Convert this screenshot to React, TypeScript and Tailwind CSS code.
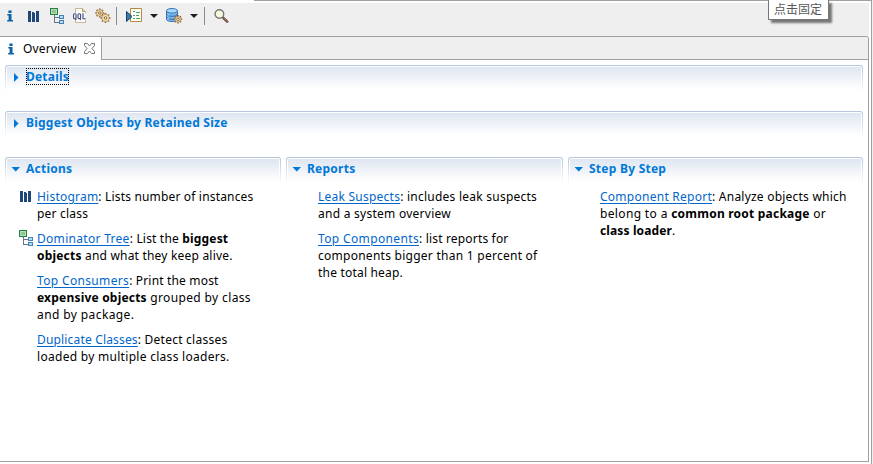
import type { ReactNode } from "react";

function InfoIcon() {
  return (
    <svg width="16" height="16" viewBox="0 0 16 16" className="shrink-0">
      <path d="M6.4 2.4h3.2v2.6H6.4zM5.3 6h4.2v6H11v1.4H5.2V12h1.4V7.4H5.3z" fill="#0b62a8" />
    </svg>
  );
}

function HistogramIcon() {
  return (
    <svg width="16" height="16" viewBox="0 0 16 16" className="shrink-0" shapeRendering="crispEdges">
      <path d="M3 3h3v11H3zM7 4h3v10H7zM11 3h3v11h-3z" fill="#1f4879" />
      <path d="M9 4h1v1H9z" fill="#efefef" />
    </svg>
  );
}

function TreeIcon() {
  return (
    <svg width="16" height="16" viewBox="0 0 16 16" className="shrink-0" shapeRendering="crispEdges">
      <path d="M1 0h8v7H1z" fill="#23804d" />
      <path d="M2 1h6v5H2z" fill="#b9dcae" />
      <path d="M3 2h4v3H3z" fill="#8fc58d" />
      <path d="M5 7h1v8H5zM6 9h4v1H6zM6 14h4v1H6z" fill="#68738c" />
      <path d="M10 7h5v4h-5zM10 12h5v4h-5z" fill="#4a7fb5" />
      <path d="M11 8h3v2h-3zM11 13h3v2h-3z" fill="#a9e0fb" />
    </svg>
  );
}

function OqlIcon() {
  return (
    <svg width="16" height="16" viewBox="0 0 16 16" className="shrink-0">
      <path d="M3.5.5h7l3 3v11h-10z" fill="#fbfbf7" stroke="#c2b798" />
      <path d="M10.5.5v3h3" fill="#ead9a3" stroke="#b9a164" />
      <path d="M0 5h14v6.5H0z" fill="#f4f5f8" />
      <g fill="none" stroke="#454c7c" strokeWidth="1.1">
        <rect x="1.5" y="5.8" width="2.6" height="5" rx="1.2" />
        <rect x="6" y="5.8" width="2.6" height="5" rx="1.2" />
        <path d="M3.2 10l1 2M7.7 10l1 2M11 5.3v5.5h2.6" />
      </g>
    </svg>
  );
}

function Gear({ x, y, r }: { x: number; y: number; r: number }) {
  return (
    <g transform={`translate(${x} ${y})`}>
      <g stroke="#8d6235" strokeWidth="1.6">
        <path d={`M0 ${-r - 1}V${r + 1}M${-r - 1} 0H${r + 1}`} />
        <path d={`M0 ${-r - 1}V${r + 1}M${-r - 1} 0H${r + 1}`} transform="rotate(45)" />
      </g>
      <circle r={r - 0.3} fill="#f6e2b2" stroke="#b08850" strokeWidth="0.7" />
      <circle r="1.3" fill="#fffbe9" stroke="#7d5a2c" strokeWidth="0.9" />
    </g>
  );
}

function GearsIcon() {
  return (
    <svg width="16" height="16" viewBox="0 0 16 16" className="shrink-0">
      <Gear x={4.8} y={5} r={3.5} />
      <Gear x={10.5} y={10} r={4} />
    </svg>
  );
}

function RunReportIcon() {
  return (
    <svg width="16" height="16" viewBox="0 0 16 16" className="shrink-0">
      <path d="M4.5.5h11v13h-11z" fill="#fffef5" stroke="#b18c42" />
      <path d="M7 3.5h2M7 7.5h2M7 10.5h2M10 4.5h4M10 7.5h3M10 10.5h4" stroke="#4aa078" />
      <path d="M.5 3.5v10l5.5-5z" fill="#367e9f" stroke="#173f75" />
    </svg>
  );
}

function DatabaseGearIcon() {
  return (
    <svg width="17" height="16" viewBox="0 0 17 16" className="shrink-0">
      <path d="M.5 3v8c0 3.4 11 3.4 11 0V3" fill="#7db9ee" stroke="#3577b8" />
      <ellipse cx="6" cy="2.8" rx="5.5" ry="2.3" fill="#a9d9f8" stroke="#3577b8" />
      <path d="M.5 6c0 3 11 3 11 0M.5 9c0 3 11 3 11 0" fill="none" stroke="#286aac" />
      <path d="M2 6.8v1M2 10v1.5" stroke="#d2efff" />
      <Gear x={12} y={11.3} r={3.2} />
    </svg>
  );
}

function SearchIcon() {
  return (
    <svg width="16" height="16" viewBox="0 0 16 16" className="shrink-0">
      <path d="M9.3 8.8l3.9 3.9" stroke="#6d4c43" strokeWidth="2.5" strokeLinecap="round" />
      <path d="M10 9l3.4 3.4" stroke="#b88b78" strokeWidth=".7" />
      <circle cx="5.4" cy="5" r="4.3" fill="#f8f8df" stroke="#777772" strokeWidth="1.4" />
    </svg>
  );
}

function DropArrow() {
  return (
    <svg width="8" height="4" viewBox="0 0 8 4" className="shrink-0">
      <path d="M0 0h8L4 4z" fill="#202020" />
    </svg>
  );
}

function CloseIcon() {
  return (
    <svg width="11" height="11" viewBox="0 0 11 11" className="shrink-0">
      <path d="M.5.5h3l2 2.5 2-2.5h3v2L8 5.5l2.5 3v2h-3l-2-2.5-2 2.5h-3v-2L3 5.5.5 2.5z" fill="#fff" stroke="#666" strokeWidth=".9" />
    </svg>
  );
}

function Header({ title, open, focused, tracking }: { title: string; open?: boolean; focused?: boolean; tracking: string }) {
  return (
    <div className="h-[27px] rounded-t-[3px] bg-linear-to-b from-[#b3c5dd] to-white px-px pt-px">
      <div className="flex h-[26px] rounded-t-[2px] bg-white px-px pt-px">
        <div className="flex h-[25px] w-full items-start bg-linear-to-b from-[#dfe6f1] to-white to-90% pl-[4px] pt-px">
          <svg width="9" height="9" viewBox="0 0 9 9" className="mt-[5px] shrink-0">
            {open ? <path d="M.5 2H9L4.75 6.5z" fill="#0078d7" /> : <path d="M3 0v9l4.5-4.5z" fill="#0078d7" />}
          </svg>
          <h2 className={`ml-[6px] h-[17px] whitespace-nowrap text-[12px]/[17px] font-bold text-[#0078d7] ${tracking} ${focused ? "outline-1 -outline-offset-1 outline-dotted outline-black" : ""}`}>
            {title}
          </h2>
        </div>
      </div>
    </div>
  );
}

function Item({ icon, children }: { icon?: ReactNode; children: ReactNode }) {
  return (
    <div className="flex">
      <div className="h-4 w-[19px] shrink-0">{icon}</div>
      <div>{children}</div>
    </div>
  );
}

function Line({ tracking, children }: { tracking: string; children: ReactNode }) {
  return <p className={`h-[17px] whitespace-nowrap ${tracking}`}>{children}</p>;
}

function Link({ children, tracking = "" }: { children: ReactNode; tracking?: string }) {
  return <a className={`text-[#0066cc] underline decoration-1 underline-offset-2 ${tracking}`}>{children}</a>;
}

export default function App() {
  return (
    <div className="relative flex h-[464px] w-[873px] overflow-hidden bg-white font-['Noto_Sans','Noto_Sans_CJK_SC',sans-serif] text-[12px]/[17px] text-black">
      <div className="flex w-[869px] shrink-0 flex-col">
        <div className="flex h-[3px] justify-end">
          <div className="h-px w-[615px] bg-[#a0a0a0]" />
        </div>
        <div className="flex h-[33px] items-start bg-[#efefef] pl-[2px] pt-[5px]">
          <InfoIcon />
          <div className="ml-[7px]"><HistogramIcon /></div>
          <div className="ml-2"><TreeIcon /></div>
          <div className="ml-[7px]"><OqlIcon /></div>
          <div className="ml-[7px]"><GearsIcon /></div>
          <div className="ml-[5px] -mt-px h-[18px] w-px bg-[#8c8c8c]" />
          <div className="ml-[9px]"><RunReportIcon /></div>
          <div className="ml-[8px] mt-[6px]"><DropArrow /></div>
          <div className="ml-[8px]"><DatabaseGearIcon /></div>
          <div className="ml-[7px] mt-[6px]"><DropArrow /></div>
          <div className="ml-[6px] -mt-px h-[18px] w-px bg-[#8c8c8c]" />
          <div className="ml-[9px] mt-px"><SearchIcon /></div>
        </div>
        <div className="flex min-h-0 flex-1 flex-col rounded-tr-[3px] border-r border-t border-[#a0a0a0]">
          <div className="flex h-[23px] shrink-0">
            <div className="flex w-[102px] items-center rounded-tr-[2px] border-r border-[#a0a0a0] bg-white pl-[3px]">
              <InfoIcon />
              <span className="ml-1 tracking-[0.15px]">Overview</span>
              <div className="ml-auto mr-[6px]"><CloseIcon /></div>
            </div>
            <div className="flex-1 rounded-tr-[2px] border-b border-[#a0a0a0] bg-[#efefef]" />
          </div>
          <main className="flex h-[402px] flex-col border-b border-[#a0a0a0] px-[5px] pt-[5px]">
            <div className="h-[46px]"><Header title="Details" focused tracking="tracking-[0.2px]" /></div>
            <div className="h-[46px]"><Header title="Biggest Objects by Retained Size" tracking="tracking-[0.24px]" /></div>
            <div className="grid grid-cols-[276px_277px_295px] gap-x-[5px]">
              <section>
                <Header title="Actions" open tracking="tracking-[0.25px]" />
                <div className="mt-[4px] flex flex-col gap-2 pl-[13px]">
                  <Item icon={<div className="-ml-px"><HistogramIcon /></div>}>
                    <Line tracking="tracking-[0.17px]"><Link tracking="tracking-[0.22px]">Histogram</Link>: Lists number of instances</Line>
                    <Line tracking="tracking-[0.2px]">per class</Line>
                  </Item>
                  <Item icon={<TreeIcon />}>
                    <Line tracking="tracking-[0.18px]"><Link tracking="tracking-[0.3px]">Dominator Tree</Link>: List the <b>biggest</b></Line>
                    <Line tracking="tracking-[0.2px]"><b>objects</b> and what they keep alive.</Line>
                  </Item>
                  <Item>
                    <Line tracking="tracking-[0.17px]"><Link tracking="tracking-[0.34px]">Top Consumers</Link>: Print the most</Line>
                    <Line tracking="tracking-[0.36px]"><b className="tracking-[0.2px]">expensive objects</b> grouped by class</Line>
                    <Line tracking="tracking-[0.4px]">and by package.</Line>
                  </Item>
                  <Item>
                    <Line tracking="tracking-[0.24px]"><Link tracking="tracking-[0.17px]">Duplicate Classes</Link>: Detect classes</Line>
                    <Line tracking="tracking-[0.29px]">loaded by multiple class loaders.</Line>
                  </Item>
                </div>
              </section>
              <section>
                <Header title="Reports" open tracking="tracking-[0.25px]" />
                <div className="mt-[4px] flex flex-col gap-2 pl-[13px]">
                  <Item>
                    <Line tracking="tracking-[0.24px]"><Link>Leak Suspects</Link>: includes leak suspects</Line>
                    <Line tracking="tracking-[0.26px]">and a system overview</Line>
                  </Item>
                  <Item>
                    <Line tracking="tracking-[0.17px]"><Link tracking="tracking-[0.36px]">Top Components</Link>: list reports for</Line>
                    <Line tracking="tracking-[0.26px]">components bigger than 1 percent of</Line>
                    <Line tracking="tracking-[0.2px]">the total heap.</Line>
                  </Item>
                </div>
              </section>
              <section>
                <Header title="Step By Step" open tracking="tracking-[0.25px]" />
                <div className="mt-[4px] pl-[13px]">
                  <Item>
                    <Line tracking="tracking-[0.22px]"><Link tracking="tracking-[0.26px]">Component Report</Link>: Analyze objects which</Line>
                    <Line tracking="tracking-[0.35px]">belong to a <b className="tracking-[0.22px]">common root package</b> or</Line>
                    <Line tracking="tracking-[0.13px]"><b>class loader</b>.</Line>
                  </Item>
                </div>
              </section>
            </div>
          </main>
          <div className="-mr-px h-[2px] bg-white" />
        </div>
      </div>
      <div className="w-[2px] border-t border-[#a0a0a0]" />
      <div className="w-px bg-[#a0a0a0]" />
      <div className="w-px bg-[#efefef]" />
      <div className="absolute left-[768px] top-0 h-[20px] w-[61px] border border-t-0 border-[#767676] bg-white pl-[5px] font-['Noto_Sans_CJK_SC',sans-serif] text-[12px]/[17px] text-[#575757] shadow-[3px_3px_2px_rgba(0,0,0,0.5)]">
        点击固定
      </div>
    </div>
  );
}
